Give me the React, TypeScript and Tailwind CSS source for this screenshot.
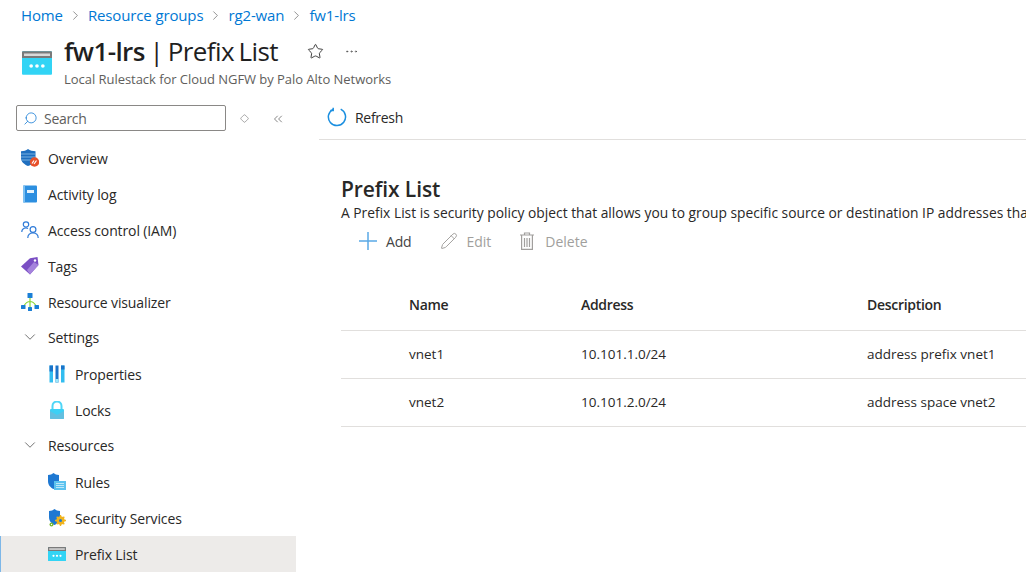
import { ChevronDown, ChevronRight, ChevronsLeft, Diamond, MoreHorizontal, Pencil, Search, Star } from 'lucide-react';
import type { ReactNode } from 'react';

const FONT = "font-['Open_Sans','Noto_Sans',sans-serif]";

function BladeIcon({ size = 18 }: { size?: number }) {
  return (
    <svg width={size} height={size} viewBox="0 0 18 18" className="shrink-0">
      <rect x="0" y="2" width="18" height="14" rx="0.6" fill="#32d4f5" />
      <path d="M0 2.6A.6.6 0 0 1 .6 2h16.8a.6.6 0 0 1 .6.6V6H0z" fill="#7a7a7a" />
      <rect x="1.2" y="3.3" width="15.6" height="1.5" fill="#d9d9d9" />
      <circle cx="5.5" cy="10.8" r="1.1" fill="#fff" />
      <circle cx="9" cy="10.8" r="1.1" fill="#fff" />
      <circle cx="12.5" cy="10.8" r="1.1" fill="#fff" />
    </svg>
  );
}

function OverviewIcon() {
  return (
    <svg width="18" height="18" viewBox="0 0 18 18" className="shrink-0">
      <path d="M0 2.2C3 2.2 5 1.5 7 0c2 1.5 4.500 2.200 7.500 2.200V9c0 4-3.500 6.500-7.500 8C3.500 15.500 0 13 0 9z" fill="#1f6fbf" />
      <path d="M0 5h14.500M0 8h14.500M.5 11h13.500" stroke="#8fc1ea" strokeWidth="0.8" />
      <circle cx="13.500" cy="13" r="4.700" fill="#e8502a" />
      <path d="M11 14.500l2-3M13 15l2.500-3.500" stroke="#fff" strokeWidth="1.200" />
    </svg>
  );
}

function ActivityIcon() {
  return (
    <svg width="18" height="18" viewBox="0 0 18 18" className="shrink-0">
      <rect x="2" y="0.500" width="14" height="17" rx="1" fill="#2d8fe0" />
      <rect x="2" y="0.500" width="2" height="17" fill="#7cc0f2" />
      <rect x="6" y="5" width="7" height="3" fill="#e6f3fc" />
    </svg>
  );
}

function IamIcon() {
  return (
    <svg width="18" height="18" viewBox="0 0 18 18" fill="none" stroke="#2f7bd8" strokeWidth="1.200" className="shrink-0">
      <circle cx="5" cy="3.500" r="2.700" />
      <path d="M.8 11c0-2.500 1.800-4 4.200-4 .8 0 1.500.2 2 .5" />
      <circle cx="12" cy="8.500" r="2.900" />
      <path d="M6.800 17c0-3 2.200-5.200 5.200-5.200s5.200 2.200 5.200 5.200" />
    </svg>
  );
}

function TagIcon() {
  return (
    <svg width="18" height="18" viewBox="0 0 18 18" className="shrink-0">
      <path d="M0 9.500 9 1.200 16.500 0 17.500 8 9 17.500z" fill="#7b4fc4" />
      <path d="M6 13 13 5l4.500 3L9 17.500z" fill="#a583dc" />
      <circle cx="14" cy="3.500" r="1.200" fill="#fff" />
    </svg>
  );
}

function VisualizerIcon() {
  return (
    <svg width="18" height="18" viewBox="0 0 18 18" className="shrink-0">
      <path d="M9 3v12M3 13c1.500-3 4-4.500 6-4.500s4.500 1.500 6 4.500" fill="none" stroke="#86d633" strokeWidth="1.200" />
      <rect x="6.500" y="0" width="5" height="5" rx="0.500" fill="#1b7fd6" />
      <rect x="0" y="12" width="4.500" height="4" rx="0.500" fill="#1b7fd6" />
      <rect x="13.500" y="12" width="4.500" height="4" rx="0.500" fill="#1b7fd6" />
      <rect x="7" y="14" width="4" height="4" rx="0.500" fill="#1b7fd6" />
    </svg>
  );
}

function PropertiesIcon() {
  return (
    <svg width="18" height="18" viewBox="0 0 18 18" className="shrink-0">
      <rect x="1.500" y="0.500" width="3.500" height="17" fill="#32bdf0" />
      <rect x="1.500" y="0.500" width="3.500" height="6" fill="#1b73c9" />
      <rect x="7.500" y="0.500" width="3" height="17" fill="#1b73c9" />
      <rect x="7.500" y="14" width="3" height="3.500" fill="#9be8fa" />
      <rect x="13" y="0.500" width="3.500" height="17" fill="#32bdf0" />
      <rect x="13" y="0.500" width="3.500" height="4" fill="#1b73c9" />
    </svg>
  );
}

function LockIcon() {
  return (
    <svg width="18" height="18" viewBox="0 0 18 18" className="shrink-0">
      <path d="M4.500 8V5a4.500 4.500 0 0 1 9 0V8" fill="none" stroke="#4fd6f7" strokeWidth="2" />
      <rect x="2" y="8" width="14" height="10" rx="1" fill="#3cd0f5" />
      <path d="M2 10l7 4 7-4v7a1 1 0 0 1-1 1H3a1 1 0 0 1-1-1z" fill="#62bfe0" />
    </svg>
  );
}

function RulesIcon() {
  return (
    <svg width="18" height="18" viewBox="0 0 18 18" className="shrink-0">
      <path d="M0 2c2.500 0 4-.7 5.500-2C7 1.300 8.500 2 11 2v6c0 4-2.500 6.500-5.500 8C2.500 14.500 0 12 0 8z" fill="#1e78d2" />
      <rect x="6" y="8" width="12" height="9" fill="#5cc2ee" />
      <path d="M8 10.500h8M8 12.500h8M8 14.500h8" stroke="#d4f0fb" strokeWidth="0.800" />
    </svg>
  );
}

function SecurityIcon() {
  return (
    <svg width="18" height="18" viewBox="0 0 18 18" className="shrink-0">
      <path d="M1 2c2.500 0 4-.7 5.500-2C8 1.300 9.500 2 12 2v6c0 4-2.500 6.500-5.500 8C3.500 14.500 1 12 1 8z" fill="#1e78d2" />
      <circle cx="12.500" cy="11.500" r="4.200" fill="#f0b31c" />
      <path d="M12.500 6v11M7 11.500h11M8.700 7.700l7.600 7.600M16.300 7.700l-7.600 7.600" stroke="#f0b31c" strokeWidth="1.400" />
      <circle cx="12.500" cy="11.500" r="1.500" fill="#1e78d2" />
      <circle cx="3.500" cy="15.500" r="2" fill="#76b82a" />
      <circle cx="3.500" cy="15.500" r="0.700" fill="#fff" />
    </svg>
  );
}

function RefreshIcon() {
  return (
    <svg width="20" height="20" viewBox="0 0 20 20" fill="none" stroke="#1b8fe0" strokeWidth="1.500" className="shrink-0">
      <path d="M13.700 2.200A8.600 8.600 0 1 1 6 2.300" />
      <path d="M6.200.8V3.500H3.300" />
    </svg>
  );
}

function PlusIcon() {
  return (
    <svg width="18" height="18" viewBox="0 0 18 18" stroke="#5aa9e6" strokeWidth="1.500" className="shrink-0">
      <path d="M9 0v18M0 9h18" />
    </svg>
  );
}

function TrashIcon() {
  return (
    <svg width="16" height="18" viewBox="0 0 16 18" fill="none" stroke="#a19f9d" strokeWidth="1.200" className="shrink-0">
      <path d="M1 3h14M5.500 3V1h5v2M2.600 3v14.400h10.800V3" />
      <path d="M5.500 6v9M8 6v9M10.500 6v9" />
    </svg>
  );
}

function NavRow({ icon, label, child = false, active = false }: { icon: ReactNode; label: string; child?: boolean; active?: boolean }) {
  const indent = active ? 'pl-[47px]' : child ? 'pl-[48px]' : 'pl-[21px]';
  return (
    <div
      className={`h-9 flex items-center gap-[9px] text-[14px] tracking-[-0.12px] text-[#292827] ${indent} ${
        active ? 'bg-[#edebe9] border-l border-l-[#7db7e8] font-medium' : ''
      }`}
    >
      {icon}
      <span>{label}</span>
    </div>
  );
}

function GroupRow({ label }: { label: string }) {
  return (
    <div className="h-9 pb-[2px] flex items-center gap-[9px] pl-[21px] text-[14px] tracking-[-0.12px] text-[#292827]">
      <ChevronDown size={18} strokeWidth={1} className="text-[#444] shrink-0" />
      <span>{label}</span>
    </div>
  );
}

function Crumb({ label }: { label: string }) {
  return <span className="text-[#0078d4]">{label}</span>;
}

function CrumbSep() {
  return <ChevronRight size={15} strokeWidth={1} className="text-[#555] mx-[5px]" />;
}

function TableRow({ name, address, description, bold = false }: { name: string; address: string; description: string; bold?: boolean }) {
  return (
    <div className={`h-12 flex items-center border-b border-[#e1dfdd] text-[#292827] ${bold ? 'pb-[5px] text-[14px] font-semibold tracking-[-0.3px]' : 'text-[13.500px]'}`}>
      <span className="w-[240px] pl-[68px]">{name}</span>
      <span className="w-[286px]">{address}</span>
      <span>{description}</span>
    </div>
  );
}

export default function App() {
  return (
    <div className={`${FONT} w-[1026px] h-[576px] overflow-hidden bg-white flex flex-col`}>
      {/* Breadcrumb */}
      <div className="h-[31px] flex items-center pl-[21px] text-[15px] tracking-[-0.13px]">
        <Crumb label="Home" />
        <CrumbSep />
        <Crumb label="Resource groups" />
        <CrumbSep />
        <Crumb label="rg2-wan" />
        <CrumbSep />
        <Crumb label="fw1-lrs" />
      </div>

      {/* Title */}
      <div className="h-[64px] flex pl-[22px]">
        <div className="pt-[17px] pr-[12px]">
          <BladeIcon size={30} />
        </div>
        <div>
          <div className="flex items-center h-[40px]">
            <h1 className="text-[26px] tracking-[-0.6px] [word-spacing:-1.5px] text-[#1f1f1f] leading-none">
              <span className="font-semibold">fw1-lrs</span> | Prefix List
            </h1>
            <Star size={17} strokeWidth={1.300} className="ml-[29px] text-[#333]" />
            <MoreHorizontal size={15} strokeWidth={1} className="ml-[20px] text-[#444]" />
          </div>
          <p className="text-[13px] tracking-[-0.04px] text-[#605e5c] leading-[16px]">Local Rulestack for Cloud NGFW by Palo Alto Networks</p>
        </div>
      </div>

      <div className="flex flex-1 min-h-0">
        {/* Sidebar */}
        <aside className="w-[319px] shrink-0">
          <div className="h-[45px] pt-[10px] flex items-start pl-[16px]">
            <div className="w-[210px] h-[26px] border border-[#8a8886] rounded-[2px] flex items-center pl-[6px] gap-[6px] text-[14px] tracking-[-0.3px] text-[#605e5c]">
              <Search size={15} strokeWidth={1.300} className="text-[#1b7fd6] -scale-x-100" />
              <span>Search</span>
            </div>
            <Diamond size={9} strokeWidth={1.200} className="ml-[14px] mt-[9px] text-[#444]" />
            <ChevronsLeft size={14} strokeWidth={1.100} className="ml-[22px] mt-[7px] text-[#444]" />
          </div>
          <div className="w-[296px]">
            <NavRow icon={<OverviewIcon />} label="Overview" />
            <NavRow icon={<ActivityIcon />} label="Activity log" />
            <NavRow icon={<IamIcon />} label="Access control (IAM)" />
            <NavRow icon={<TagIcon />} label="Tags" />
            <NavRow icon={<VisualizerIcon />} label="Resource visualizer" />
            <GroupRow label="Settings" />
            <NavRow child icon={<PropertiesIcon />} label="Properties" />
            <NavRow child icon={<LockIcon />} label="Locks" />
            <GroupRow label="Resources" />
            <NavRow child icon={<RulesIcon />} label="Rules" />
            <NavRow child icon={<SecurityIcon />} label="Security Services" />
            <NavRow child active icon={<BladeIcon />} label="Prefix List" />
          </div>
        </aside>

        {/* Main */}
        <main className="flex-1 min-w-0">
          <div className="h-[45px] border-b border-[#e1dfdd] flex items-center pl-[8px] gap-[8px] text-[14px] tracking-[-0.3px] text-[#292827]">
            <RefreshIcon />
            <span>Refresh</span>
          </div>
          <div className="pl-[22px] pt-[36px]">
            <h2 className="text-[21px] leading-[26px] mb-[2px] font-semibold tracking-[-0.1px] text-[#292827]">Prefix List</h2>
            <p className="text-[13.800px] leading-[18px] text-[#292827] whitespace-nowrap">
              A Prefix List is security policy object that allows you to group specific source or destination IP addresses that share
            </p>
            <div className="h-[38px] flex items-center pl-[18px] text-[14px]">
              <PlusIcon />
              <span className="ml-[9px] text-[#444] tracking-[-0.2px]">Add</span>
              <Pencil size={18} strokeWidth={1.300} className="ml-[29px] text-[#a19f9d]" />
              <span className="ml-[8px] text-[#a19f9d]">Edit</span>
              <span className="ml-[28px]"><TrashIcon /></span>
              <span className="ml-[10px] text-[#a19f9d]">Delete</span>
            </div>
            <div className="mt-[23px]">
              <TableRow bold name="Name" address="Address" description="Description" />
              <TableRow name="vnet1" address="10.101.1.0/24" description="address prefix vnet1" />
              <TableRow name="vnet2" address="10.101.2.0/24" description="address space vnet2" />
            </div>
          </div>
        </main>
      </div>
    </div>
  );
}
